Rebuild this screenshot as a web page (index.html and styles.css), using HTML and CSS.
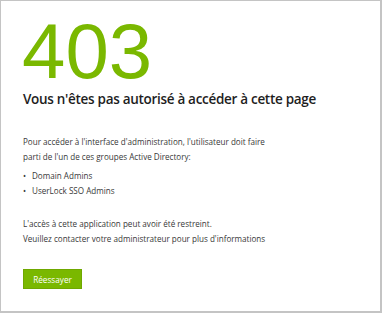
FILE: index.html
```html
<!DOCTYPE html>
<html lang="fr">

<head>
    <meta charset="UTF-8">
    <meta name="viewport" content="width=device-width, initial-scale=1.0">
    <title>403 - Accès refusé</title>
    <link rel="stylesheet" href="styles.css">
</head>

<body>
    <div class="page">
        <h1 class="code">403</h1>
        <h2 class="title">Vous n'êtes pas autorisé à accéder à cette page</h2>

        <p class="info">Pour accéder à l'interface d'administration, l'utilisateur doit faire<br>
            parti de l'un de ces groupes Active Directory:</p>

        <ul class="groups">
            <li>Domain Admins</li>
            <li>UserLock SSO Admins</li>
        </ul>

        <p class="info second">L'accès à cette application peut avoir été restreint.<br>
            Veuillez contacter votre administrateur pour plus d'informations</p>

        <button class="retry">Réessayer</button>
    </div>
</body>

</html>
```

FILE: styles.css
```css
* {
    margin: 0;
    padding: 0;
    box-sizing: border-box;
}

body {
    font-family: "Open Sans", "Noto Sans", sans-serif;
    background-color: white;
}

.page {
    width: 382px;
    height: 313px;
    border: 1px solid #c4c4c4;
    border-right-width: 2px;
    border-bottom-width: 2px;
    padding: 12px 0 0 22px;
}

.code {
    font-family: "Liberation Sans", Arial, sans-serif;
    font-weight: normal;
    font-size: 78px;
    line-height: 76px;
    color: #7ab800;
    margin-left: -1px;
}

.title {
    font-size: 13.5px;
    font-weight: 600;
    line-height: 20px;
    color: #1e1e1e;
    letter-spacing: -0.3px;
}

.info {
    font-size: 8.1px;
    line-height: 14.5px;
    color: #383838;
    margin-top: 26px;
}

.info.second {
    margin-top: 19px;
}

.groups {
    list-style: none;
    margin-top: 5px;
    font-size: 8.1px;
    line-height: 14.5px;
    color: #383838;
}

.groups li::before {
    content: "•";
    display: inline-block;
    width: 9px;
}

.retry {
    display: block;
    margin-top: 23px;
    width: 59px;
    height: 20px;
    background-color: #7ab800;
    color: white;
    border: 1px solid #6fa800;
    font-family: "Open Sans", sans-serif;
    font-size: 8.2px;
    cursor: pointer;
}
```
